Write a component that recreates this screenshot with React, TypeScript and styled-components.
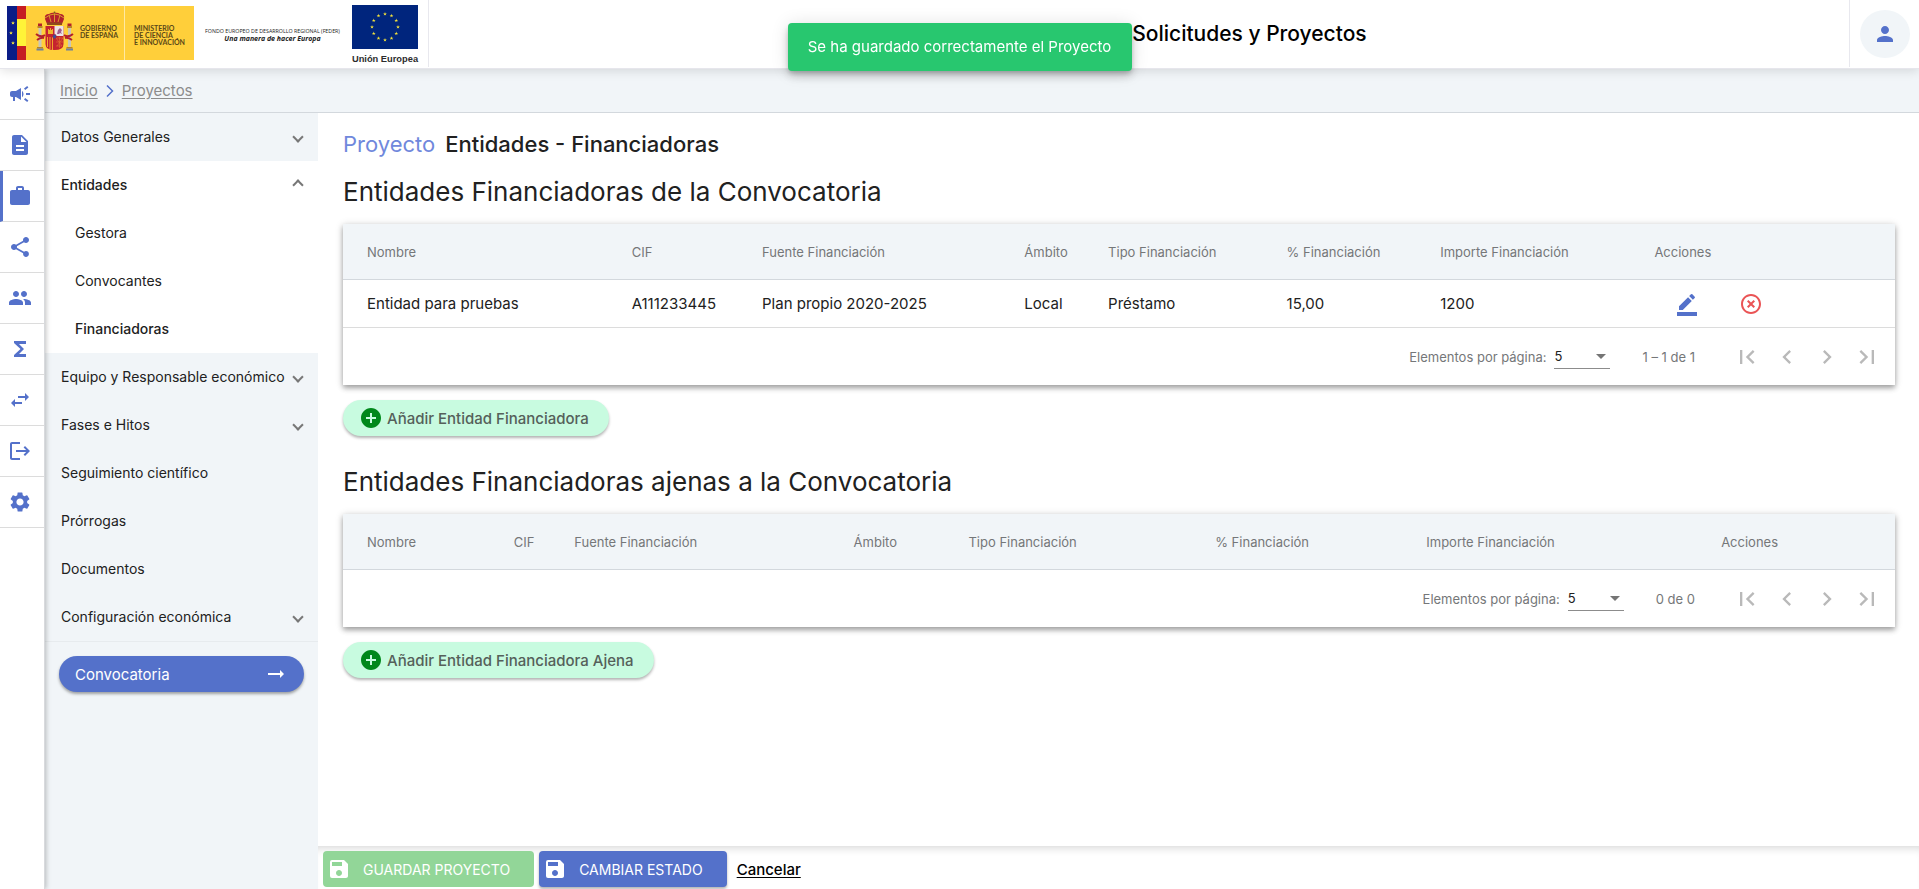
import React from "react";
import styled, { createGlobalStyle, css } from "styled-components";
import {
  MdAddCircle,
  MdArrowRightAlt,
  MdBorderColor,
  MdCampaign,
  MdChevronLeft,
  MdChevronRight,
  MdDescription,
  MdFirstPage,
  MdFunctions,
  MdHighlightOff,
  MdLastPage,
  MdLogout,
  MdPeople,
  MdPerson,
  MdSave,
  MdSettings,
  MdShare,
  MdSwapHoriz,
  MdWork,
} from "react-icons/md";

const color = {
  blue: "#5471ca",
  panel: "#f1f5f8",
  line: "#d3d8dd",
  text: "#212121",
  muted: "#757779",
};

const GlobalStyle = createGlobalStyle`
  *, *::before, *::after { box-sizing: border-box; }
  body {
    margin: 0;
    background: #fff;
    color: ${color.text};
    font-family: Inter, "Noto Sans", sans-serif;
    font-size: 15px;
  }
  button, select { font: inherit; }
  button { cursor: pointer; }
`;

const Page = styled.div`
  display: flex;
  flex-direction: column;
  min-height: 100vh;
`;

const Header = styled.header`
  position: relative;
  z-index: 2;
  display: grid;
  grid-template-columns: 59% 1fr auto;
  height: 69px;
  background: #fff;
  border-bottom: 1px solid #e6e6ec;
  box-shadow: 0 2px 10px rgba(0, 0, 0, 0.12);
`;

const Logos = styled.div`
  justify-self: start;
  width: 429px;
  height: 67px;
  border-right: 1px solid #e8e8ee;
`;

const AppTitle = styled.h1`
  align-self: center;
  margin: 0;
  color: #000;
  font-size: 21px;
  line-height: 24px;
  font-weight: 500;
`;

const UserArea = styled.div`
  display: flex;
  align-items: center;
  height: 67px;
  padding: 0 9px 0 10px;
  border-left: 1px solid #e8e8ee;
`;

const UserButton = styled.button`
  display: grid;
  place-items: center;
  width: 50px;
  height: 48px;
  padding: 0;
  border: 0;
  border-radius: 50%;
  background: ${color.panel};
  color: ${color.blue};
`;

const Toast = styled.div`
  position: fixed;
  z-index: 5;
  top: 23px;
  left: 50%;
  transform: translateX(-50%);
  width: 344px;
  padding: 14px 20px;
  border-radius: 4px;
  background: #28c76f;
  color: #fff;
  font-size: 15px;
  line-height: 20px;
  text-align: center;
  white-space: nowrap;
  box-shadow: 0 3px 5px -1px rgba(0, 0, 0, 0.2), 0 6px 10px rgba(0, 0, 0, 0.14),
    0 1px 18px rgba(0, 0, 0, 0.12);
`;

const Body = styled.div`
  display: flex;
  flex: 1;
`;

const Rail = styled.nav`
  position: relative;
  z-index: 1;
  flex: none;
  width: 45px;
  background: #fff;
  border-right: 1px solid #d8dadd;
  box-shadow: 1px 0 5px rgba(0, 0, 0, 0.25);
`;

const RailLink = styled.a<{ $active?: boolean }>`
  display: flex;
  align-items: center;
  height: 51px;
  padding-left: ${(p) => (p.$active ? 5 : 8)}px;
  border-left: ${(p) => (p.$active ? `3px solid ${color.blue}` : "0")};
  border-bottom: 1px solid #dcdcdc;
  color: ${color.blue};
`;

const Column = styled.div`
  display: flex;
  flex: 1;
  flex-direction: column;
  min-width: 0;
`;

const Breadcrumb = styled.nav`
  display: flex;
  align-items: center;
  gap: 8px;
  height: 44px;
  padding-left: 15px;
  background: ${color.panel};
  border-bottom: 1px solid ${color.line};
`;

const Crumb = styled.a`
  color: #8c8c8c;
  font-size: 15px;
  line-height: 20px;
  text-underline-offset: 2px;
`;

const Split = styled.div`
  display: flex;
  flex: 1;
`;

const Menu = styled.nav`
  flex: none;
  width: 273px;
  background: ${color.panel};
`;

const MenuList = styled.div`
  border-bottom: 1px solid #e7ebee;
`;

const menuLine = css<{ $strong?: boolean }>`
  display: flex;
  align-items: center;
  width: 100%;
  height: 48px;
  border: 0;
  background: transparent;
  color: ${color.text};
  font-size: 14px;
  line-height: 20px;
  font-weight: ${(p) => (p.$strong ? 500 : 400)};
  text-align: left;
  text-decoration: none;
  white-space: nowrap;
`;

const MenuLink = styled.a<{ $strong?: boolean }>`
  ${menuLine}
  padding: 0 16px;
`;

const MenuToggle = styled.button<{ $strong?: boolean }>`
  ${menuLine}
  justify-content: space-between;
  padding: 0 16px;
`;

const MenuGroup = styled.div`
  background: #fff;
`;

const SubLink = styled.a<{ $strong?: boolean }>`
  ${menuLine}
  padding: 0 16px 0 30px;
`;

const Caret = styled.span<{ $up?: boolean }>`
  flex: none;
  width: 8px;
  height: 8px;
  border: solid #777;
  border-width: 0 2px 2px 0;
  transform: ${(p) => (p.$up ? "rotate(225deg)" : "rotate(45deg)")};
`;

const CallButton = styled.button`
  display: flex;
  align-items: center;
  justify-content: space-between;
  width: 245px;
  height: 36px;
  margin: 14px;
  padding: 0 16px;
  border: 0;
  border-radius: 18px;
  background: ${color.blue};
  color: #fff;
  font-size: 15px;
  box-shadow: 0 2px 3px rgba(0, 0, 0, 0.35);
`;

const Main = styled.div`
  display: flex;
  flex: 1;
  flex-direction: column;
  min-width: 0;
`;

const Content = styled.main`
  flex: 1;
  padding: 15px 24px 15px 25px;
`;

const PageTitle = styled.h2`
  display: flex;
  gap: 10px;
  margin: 0;
  font-size: 22px;
  line-height: 32px;
  font-weight: 500;
`;

const TitleContext = styled.span`
  color: #7088dc;
  font-weight: 400;
`;

const Section = styled.section`
  margin-bottom: 30px;
`;

const SectionTitle = styled.h3`
  margin: 16px 0;
  font-size: 26px;
  line-height: 32px;
  font-weight: 400;
`;

const Card = styled.div`
  margin-bottom: 15px;
  background: #fff;
  box-shadow: 0 3px 5px rgba(0, 0, 0, 0.3), 0 1px 8px rgba(0, 0, 0, 0.16);
`;

const Table = styled.table`
  width: 100%;
  border-collapse: separate;
  border-spacing: 0;
  table-layout: fixed;
`;

const HeadCell = styled.th`
  height: 56px;
  padding: 0;
  background: ${color.panel};
  border-bottom: 1px solid ${color.line};
  color: ${color.muted};
  font-size: 13px;
  font-weight: 400;
  text-align: left;
  white-space: nowrap;
  &:first-child { padding-left: 24px; }
`;

const Cell = styled.td`
  height: 48px;
  padding: 0;
  border-bottom: 1px solid #dcdcdc;
  font-size: 15px;
  white-space: nowrap;
  &:first-child { padding-left: 24px; }
`;

const RowActions = styled.div`
  display: flex;
  gap: 40px;
  padding-left: 21px;
`;

const IconButton = styled.button<{ $color: string; $size?: number }>`
  display: grid;
  place-items: center;
  width: ${(p) => p.$size ?? 24}px;
  height: ${(p) => p.$size ?? 24}px;
  padding: 0;
  border: 0;
  background: transparent;
  color: ${(p) => p.$color};
`;

const Paginator = styled.div`
  display: flex;
  align-items: center;
  justify-content: flex-end;
  height: 57px;
  padding-right: 8px;
  color: ${color.muted};
  font-size: 13px;
`;

const SelectBox = styled.span`
  display: grid;
  align-items: center;
  width: 56px;
  height: 24px;
  margin: 0 32px 0 8px;
  border-bottom: 1px solid #8c8c8c;
  > * { grid-area: 1 / 1; }
`;

const PageSize = styled.select`
  width: 100%;
  height: 22px;
  padding: 0;
  border: 0;
  outline: 0;
  appearance: none;
  background: transparent;
  color: ${color.text};
`;

const SelectArrow = styled.span`
  justify-self: end;
  margin-right: 4px;
  border: 5px solid transparent;
  border-top-color: #757575;
  border-bottom: 0;
  pointer-events: none;
`;

const Range = styled.span`
  margin-right: 32px;
`;

const AddButton = styled.button`
  display: flex;
  align-items: center;
  gap: 4px;
  height: 36px;
  padding: 0 20px 0 16px;
  border: 0;
  border-radius: 18px;
  background: #c8fbe0;
  color: #55605a;
  font-size: 15px;
  font-weight: 500;
  box-shadow: 0 2px 3px rgba(0, 0, 0, 0.3);
  svg { color: #00881b; }
`;

const Footer = styled.footer`
  display: flex;
  align-items: center;
  gap: 5px;
  height: 43px;
  padding: 3px 5px 0;
  box-shadow: inset 0 8px 8px -6px rgba(0, 0, 0, 0.16);
`;

const FooterButton = styled.button<{ $bg: string; $flat?: boolean }>`
  display: flex;
  align-items: center;
  gap: 12px;
  height: 36px;
  padding: 0 24px 0 4px;
  border: 0;
  border-radius: 4px;
  background: ${(p) => p.$bg};
  color: #fff;
  font-size: 14px;
  font-weight: 400;
  white-space: nowrap;
  box-shadow: ${(p) => (p.$flat ? "none" : "0 2px 3px rgba(0, 0, 0, 0.3)")};
`;

const CancelLink = styled.a`
  margin-left: 5px;
  color: #000;
  font-size: 15px;
  font-weight: 500;
  text-underline-offset: 2px;
`;

const star =
  "M0-2 .5-.6 1.9-.6.8.2 1.2 1.6 0 .8-1.2 1.6-.8.2-1.9-.6-.5-.6Z";

function InstitutionLogos() {
  return (
    <svg width="428" height="67" viewBox="0 0 428 67" role="img" aria-label="Logotipos institucionales">
      <rect x="7" y="6" width="187" height="54" fill="#ffcf3a" />
      <rect x="7" y="6" width="10" height="54" fill="#0a1d87" />
      <rect x="17" y="6" width="9" height="54" fill="#c61d23" />
      <rect x="17" y="19" width="9" height="27" fill="#fff338" />
      {[[13, 23], [11, 33], [13, 43]].map(([x, y]) => (
        <path key={y} d={star} transform={`translate(${x} ${y})`} fill="#fff338" />
      ))}
      <path d="M124.500 6V60" stroke="#ffe9a3" />

      <g>
        <path d="M45 19q-1-5 4-5 3-2 5.500-1 3-1 5.500 1 5 0 4 5l-2 5H47Z" fill="#b3202c" />
        <path d="M45 18q5-4 9.500-4t9.500 4M54.500 13v9M49 15l2 7M60 15l-2 7" fill="none" stroke="#d99a2b" />
        <path d="M47 22.500h15v2.500H47Z" fill="#8f4a1c" />
        <circle cx="54.500" cy="12.500" r="1" fill="#7b5a1d" />
        <path d="M45.500 26h18v18q0 6-9 6t-9-6Z" fill="#c5232f" />
        <path d="M54.500 26h9v10h-9Z" fill="#ece4e6" />
        <path d="M57 34l1-4 2-2 2 2-1 2 1 2-2-1-1 1Z" fill="#a05c8c" />
        <path d="M48 34v-5h1v1h1v-2h1v2h1v-1h1v5Z" fill="#f0b52c" />
        <path d="M47.500 37v10M50 37v12M52.500 37v13" stroke="#f0a32c" strokeWidth="1" />
        <path d="M56 38h7M56 42h7M56 46h6M59.500 37v11M56 38l6 8M63 38l-6 8" stroke="#e0792a" strokeWidth=".6" />
        <ellipse cx="54.500" cy="36.500" rx="1.800" ry="2.200" fill="#36509f" stroke="#b3202c" strokeWidth=".6" />
        {[40, 69.5].map((x) => (
          <g key={x}>
            <rect x={x - 1.5} y="28" width="3" height="19" fill="#c9c6b9" />
            <rect x={x - 2.5} y="26" width="5" height="2" fill="#b88325" />
            <rect x={x - 2} y="23.500" width="4" height="2.500" fill="#b3202c" />
            <rect x={x - 3} y="47" width="6" height="1.500" fill="#b88325" />
            <rect x={x - 3.500} y="48.500" width="7" height="2" fill="#70829c" />
          </g>
        ))}
        <path d="M36 34q5 4 9 1M37 40q4-3 7-2M73 34q-5 4-9 1M72 40q-4-3-7-2" fill="none" stroke="#b3202c" strokeWidth="2" />
      </g>

      <g fontFamily="Lato, sans-serif" fontSize="7" fontWeight="700" fill="#5a4818">
        <text x="80" y="30.500">GOBIERNO</text>
        <text x="80" y="37.500">DE ESPAÑA</text>
        <text x="134" y="30.500">MINISTERIO</text>
        <text x="134" y="37.500">DE CIENCIA</text>
        <text x="134" y="44.500">E INNOVACIÓN</text>
      </g>

      <g fontFamily="'Open Sans', sans-serif" textAnchor="middle" fill="#222">
        <text x="272.500" y="33" fontSize="5.300">FONDO EUROPEO DE DESARROLLO REGIONAL (FEDER)</text>
        <text x="272.500" y="41" fontSize="7" fontWeight="700" fontStyle="italic">Una manera de hacer Europa</text>
      </g>

      <rect x="352" y="5" width="66" height="44" fill="#00257d" />
      {Array.from({ length: 12 }, (_, i) => {
        const a = (i * Math.PI) / 6;
        return (
          <path
            key={i}
            d={star}
            transform={`translate(${385 + 13 * Math.sin(a)} ${27 - 13 * Math.cos(a)})`}
            fill="#f3e23b"
          />
        );
      })}
      <text x="385" y="61.500" textAnchor="middle" fontFamily="'Liberation Sans', sans-serif" fontSize="9.300" fontWeight="700" fill="#2c2c2c">
        Unión Europea
      </text>
    </svg>
  );
}

const railItems = [
  { label: "Convocatorias", Icon: MdCampaign },
  { label: "Solicitudes", Icon: MdDescription },
  { label: "Proyectos", Icon: MdWork, active: true },
  { label: "Compartir", Icon: MdShare },
  { label: "Grupos", Icon: MdPeople },
  { label: "Totales", Icon: MdFunctions },
  { label: "Movimientos", Icon: MdSwapHoriz },
  { label: "Salir", Icon: MdLogout },
  { label: "Ajustes", Icon: MdSettings },
];

const headings = [
  "Nombre",
  "CIF",
  "Fuente Financiación",
  "Ámbito",
  "Tipo Financiación",
  "% Financiación",
  "Importe Financiación",
  "Acciones",
];

type FundersProps = {
  id: string;
  title: string;
  widths: number[];
  rows: string[][];
  range: string;
  addLabel: string;
};

function Funders({ id, title, widths, rows, range, addLabel }: FundersProps) {
  return (
    <Section>
      <SectionTitle>{title}</SectionTitle>
      <Card>
        <Table>
          <colgroup>
            {widths.map((w, i) => (
              <col key={i} width={`${w}%`} />
            ))}
            <col />
          </colgroup>
          <thead>
            <tr>
              {headings.map((h) => (
                <HeadCell key={h} scope="col">{h}</HeadCell>
              ))}
            </tr>
          </thead>
          <tbody>
            {rows.map((row) => (
              <tr key={row[1]}>
                {row.map((value, i) => (
                  <Cell key={i}>{value}</Cell>
                ))}
                <Cell>
                  <RowActions>
                    <IconButton $color={color.blue} aria-label="Editar"><MdBorderColor size={24} /></IconButton>
                    <IconButton $color="#ea5455" aria-label="Eliminar"><MdHighlightOff size={24} /></IconButton>
                  </RowActions>
                </Cell>
              </tr>
            ))}
          </tbody>
        </Table>
        <Paginator>
          <label htmlFor={id}>Elementos por página:</label>
          <SelectBox>
            <PageSize id={id} defaultValue="5">
              <option>5</option>
              <option>10</option>
              <option>25</option>
            </PageSize>
            <SelectArrow />
          </SelectBox>
          <Range>{range}</Range>
          <IconButton $size={40} $color="#b9b9b9" aria-label="Primera página"><MdFirstPage size={28} /></IconButton>
          <IconButton $size={40} $color="#b9b9b9" aria-label="Página anterior"><MdChevronLeft size={28} /></IconButton>
          <IconButton $size={40} $color="#b9b9b9" aria-label="Página siguiente"><MdChevronRight size={28} /></IconButton>
          <IconButton $size={40} $color="#b9b9b9" aria-label="Última página"><MdLastPage size={28} /></IconButton>
        </Paginator>
      </Card>
      <AddButton>
        <MdAddCircle size={24} />
        {addLabel}
      </AddButton>
    </Section>
  );
}

export default function App() {
  return (
    <Page>
      <GlobalStyle />
      <Header>
        <Logos><InstitutionLogos /></Logos>
        <AppTitle>Solicitudes y Proyectos</AppTitle>
        <UserArea>
          <UserButton aria-label="Usuario"><MdPerson size={24} /></UserButton>
        </UserArea>
      </Header>
      <Toast role="status">Se ha guardado correctamente el Proyecto</Toast>
      <Body>
        <Rail aria-label="Módulos">
          {railItems.map(({ label, Icon, active }) => (
            <RailLink key={label} href="#" aria-label={label} $active={active}>
              <Icon size={24} />
            </RailLink>
          ))}
        </Rail>
        <Column>
          <Breadcrumb aria-label="Ruta">
            <Crumb href="#">Inicio</Crumb>
            <svg width="8" height="14" viewBox="0 0 8 14" fill="none" stroke={color.blue} strokeWidth="1.500" aria-hidden="true">
              <path d="M1 1.500 6.500 7 1 12.500" />
            </svg>
            <Crumb href="#">Proyectos</Crumb>
          </Breadcrumb>
          <Split>
            <Menu aria-label="Secciones">
              <MenuList>
                <MenuToggle>Datos Generales<Caret /></MenuToggle>
                <MenuGroup>
                  <MenuToggle $strong>Entidades<Caret $up /></MenuToggle>
                  <SubLink href="#">Gestora</SubLink>
                  <SubLink href="#">Convocantes</SubLink>
                  <SubLink href="#" $strong>Financiadoras</SubLink>
                </MenuGroup>
                <MenuToggle>Equipo y Responsable económico<Caret /></MenuToggle>
                <MenuToggle>Fases e Hitos<Caret /></MenuToggle>
                <MenuLink href="#">Seguimiento científico</MenuLink>
                <MenuLink href="#">Prórrogas</MenuLink>
                <MenuLink href="#">Documentos</MenuLink>
                <MenuToggle>Configuración económica<Caret /></MenuToggle>
              </MenuList>
              <CallButton>
                Convocatoria
                <MdArrowRightAlt size={24} />
              </CallButton>
            </Menu>
            <Main>
              <Content>
                <PageTitle>
                  <TitleContext>Proyecto</TitleContext>
                  Entidades - Financiadoras
                </PageTitle>
                <Funders
                  id="page-size-call"
                  title="Entidades Financiadoras de la Convocatoria"
                  widths={[18.6, 8.4, 16.9, 5.4, 11.5, 9.9, 13.8]}
                  rows={[["Entidad para pruebas", "A111233445", "Plan propio 2020-2025", "Local", "Préstamo", "15,00", "1200"]]}
                  range="1 – 1 de 1"
                  addLabel="Añadir Entidad Financiadora"
                />
                <Funders
                  id="page-size-external"
                  title="Entidades Financiadoras ajenas a la Convocatoria"
                  widths={[11, 3.9, 18, 7.4, 15.9, 13.6, 19]}
                  rows={[]}
                  range="0 de 0"
                  addLabel="Añadir Entidad Financiadora Ajena"
                />
              </Content>
              <Footer>
                <FooterButton $bg="#92d698" $flat><MdSave size={24} />GUARDAR PROYECTO</FooterButton>
                <FooterButton $bg={color.blue}><MdSave size={24} />CAMBIAR ESTADO</FooterButton>
                <CancelLink href="#">Cancelar</CancelLink>
              </Footer>
            </Main>
          </Split>
        </Column>
      </Body>
    </Page>
  );
}
